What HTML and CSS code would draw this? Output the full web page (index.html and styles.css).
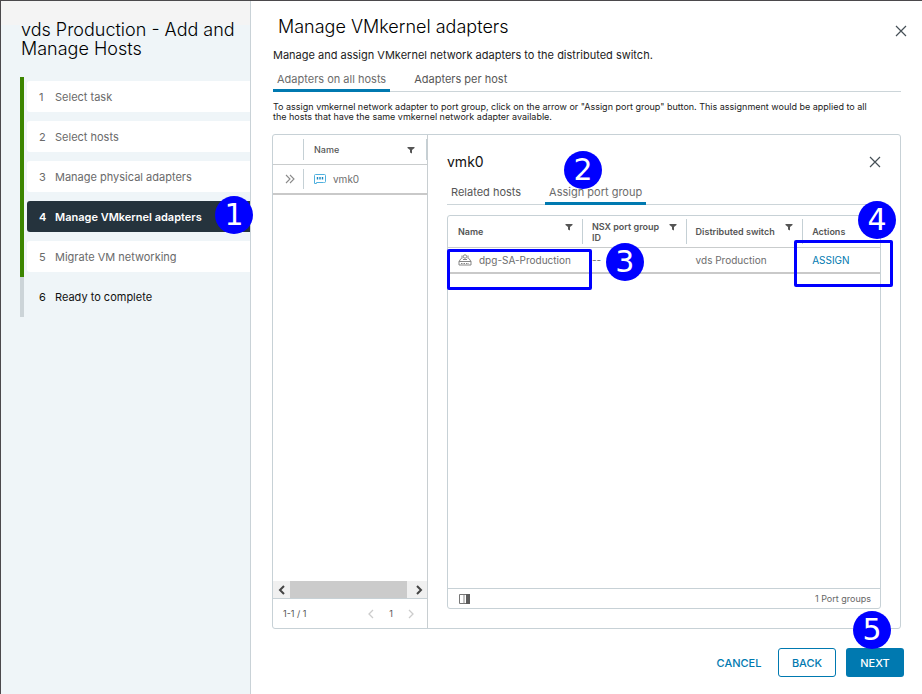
FILE: index.html
```html
<!DOCTYPE html>
<html lang="en">
<head>
<meta charset="utf-8">
<meta name="viewport" content="width=device-width, initial-scale=1">
<title>vds Production - Add and Manage Hosts</title>
<link rel="stylesheet" href="styles.css">
</head>
<body>
<svg class="sprite" aria-hidden="true">
  <symbol id="filter" viewBox="0 0 8 8"><path d="M.5 1h7v1L5 4v3.500L3 6.500V4L.5 2z" fill="#555"/></symbol>
  <symbol id="close" viewBox="0 0 12 12"><path d="M1 1l10 10M11 1L1 11" stroke="#454f56" stroke-width="1.2" fill="none"/></symbol>
</svg>
<div class="wizard">
  <aside class="sidebar">
    <h2 class="wizard-title">vds Production - Add and Manage Hosts</h2>
    <ol class="steps">
      <li class="step done"><a href="#"><span class="num">1</span>Select task</a></li>
      <li class="step done"><a href="#"><span class="num">2</span>Select hosts</a></li>
      <li class="step done"><a href="#"><span class="num">3</span>Manage physical adapters</a></li>
      <li class="step done current"><a href="#" aria-current="step"><span class="num">4</span>Manage VMkernel adapters</a><span class="badge badge-1">1</span></li>
      <li class="step done"><a href="#"><span class="num">5</span>Migrate VM networking</a></li>
      <li class="step last"><a href="#"><span class="num">6</span>Ready to complete</a></li>
    </ol>
  </aside>
  <main class="page">
    <header class="page-head">
      <h1>Manage VMkernel adapters</h1>
      <button class="icon-button" type="button" aria-label="Close wizard"><svg width="12" height="12"><use href="#close"/></svg></button>
    </header>
    <p class="description">Manage and assign VMkernel network adapters to the distributed switch.</p>
    <div class="tabs" role="tablist">
      <button class="tab active" type="button" role="tab" aria-selected="true">Adapters on all hosts</button>
      <button class="tab" type="button" role="tab" aria-selected="false">Adapters per host</button>
    </div>
    <p class="hint">To assign vmkernel network adapter to port group, click on the arrow or "Assign port group" button. This assignment would be applied to all the hosts that have the same vmkernel network adapter available.</p>
    <div class="split">
      <section class="adapters">
        <table class="grid-table adapter-table">
          <colgroup><col class="col-toggle"><col></colgroup>
          <thead>
            <tr>
              <th></th>
              <th><div class="cell ruled ruled-end"><span>Name</span><svg class="filter" width="8" height="8"><use href="#filter"/></svg></div></th>
            </tr>
          </thead>
          <tbody>
            <tr>
              <td><button class="icon-button toggle" type="button" aria-label="Hide details"><svg width="10" height="10" viewBox="0 0 10 10"><path d="M1 1l4 4-4 4M5 1l4 4-4 4" fill="none" stroke="#8a8a8a" stroke-width="1.1"/></svg></button></td>
              <td><div class="cell ruled"><svg width="12" height="10" viewBox="0 0 12 10"><path d="M1.500 .5h9a1 1 0 0 1 1 1v6a1 1 0 0 1-1 1H9.500M.5 7V1.500a1 1 0 0 1 1-1M.5 6v3.500h2v-1h7" fill="none" stroke="#4fb0de"/><path d="M3.500 3v2.500M6 3v2.500M8.500 3v2.500" stroke="#1688c4" stroke-width="1.400"/></svg><span class="after-icon">vmk0</span></div></td>
            </tr>
          </tbody>
        </table>
        <div class="hscroll">
          <button class="scroll-arrow" type="button" aria-label="Scroll left"><svg width="8" height="10" viewBox="0 0 8 10"><path d="M6 1L2 5l4 4" fill="none" stroke="#444" stroke-width="2"/></svg></button>
          <span class="thumb"></span>
          <button class="scroll-arrow" type="button" aria-label="Scroll right"><svg width="8" height="10" viewBox="0 0 8 10"><path d="M2 1l4 4-4 4" fill="none" stroke="#444" stroke-width="2"/></svg></button>
        </div>
        <footer class="adapter-footer">
          <span class="range">1-1 / 1</span>
          <button class="icon-button" type="button" aria-label="Previous page" disabled><svg width="6" height="10" viewBox="0 0 6 10"><path d="M5 1L1 5l4 4" fill="none" stroke="#ccc" stroke-width="1.300"/></svg></button>
          <span>1</span>
          <button class="icon-button" type="button" aria-label="Next page" disabled><svg width="6" height="10" viewBox="0 0 6 10"><path d="M1 1l4 4-4 4" fill="none" stroke="#ccc" stroke-width="1.300"/></svg></button>
        </footer>
      </section>
      <section class="detail">
        <header class="detail-head">
          <h3>vmk0</h3>
          <button class="icon-button" type="button" aria-label="Close details"><svg width="12" height="12"><use href="#close"/></svg></button>
        </header>
        <div class="tabs" role="tablist">
          <button class="tab" type="button" role="tab" aria-selected="false">Related hosts</button>
          <button class="tab active" type="button" role="tab" aria-selected="true">Assign port group<span class="badge badge-2">2</span></button>
        </div>
        <div class="groups">
          <table class="grid-table group-table">
            <colgroup><col class="col-name"><col class="col-nsx"><col class="col-switch"><col></colgroup>
            <thead>
              <tr>
                <th><div class="cell"><span>Name</span><svg class="filter raised" width="8" height="8"><use href="#filter"/></svg></div></th>
                <th><div class="cell ruled"><span>NSX port group ID</span><svg class="filter raised" width="8" height="8"><use href="#filter"/></svg></div></th>
                <th><div class="cell ruled"><span>Distributed switch</span><svg class="filter raised" width="8" height="8"><use href="#filter"/></svg></div></th>
                <th><div class="cell ruled"><span>Actions</span></div><span class="badge badge-4">4</span></th>
              </tr>
            </thead>
            <tbody>
              <tr>
                <td><div class="cell"><svg width="14" height="12" viewBox="0 0 14 12" fill="none" stroke="#858585"><path d="M3.500 4.500H3L1 7.500v3.500h12V7.500L11 4.500h-.5M1 7.500h12"/><path d="M4 1.500v3M10 1.500v3M5 5.500h4"/><circle cx="7" cy="2.500" r="1.700"/><path d="M3 9.500h8" stroke-dasharray="1.500 1"/></svg><span class="after-icon">dpg-SA-Production</span></div><span class="callout callout-name"></span></td>
                <td><div class="cell"><span>--</span></div><span class="badge badge-3">3</span></td>
                <td><div class="cell"><span>vds Production</span></div></td>
                <td><div class="cell"><button class="assign" type="button">ASSIGN</button></div><span class="callout callout-assign"></span></td>
              </tr>
            </tbody>
          </table>
          <footer class="group-footer">
            <button class="icon-button" type="button" aria-label="Show columns"><svg width="11" height="10" viewBox="0 0 11 10"><path d="M.5.5h10v9H.5z" fill="#fff" stroke="#777"/><path d="M4 1h2v8H4z" fill="#c4c4c4"/><path d="M7 0h4v10H7z" fill="#5c5c5c"/></svg></button>
            <span>1 Port groups</span>
          </footer>
        </div>
      </section>
    </div>
    <footer class="actions">
      <button class="btn link" type="button">CANCEL</button>
      <button class="btn outline" type="button">BACK</button>
      <button class="btn primary" type="button">NEXT<span class="badge badge-5">5</span></button>
    </footer>
  </main>
</div>
</body>
</html>
```
FILE: styles.css
```css
* { box-sizing: border-box; }
body {
  margin: 0;
  font: 11px/16px Inter, "Liberation Sans", sans-serif;
  color: #1b1b1b;
  background: #fff;
}
h1, h2, h3, p, ol { margin: 0; padding: 0; font-weight: 400; }
button { font: inherit; color: inherit; border: 0; background: none; padding: 0; cursor: pointer; }
svg { display: block; flex: none; }
.sprite { position: absolute; width: 0; height: 0; }

.wizard {
  display: grid;
  grid-template-columns: 250px minmax(0, 1fr);
  min-height: 100vh;
  border: solid #4b494c;
  border-width: 1px 0 0 1px;
}
.sidebar {
  display: flex;
  flex-direction: column;
  border-right: 1px solid #c9d2d7;
  background: linear-gradient(#f4f4f4 24px, #eff5f8 24px);
}
.wizard-title {
  padding: 19px 4px 0 20px;
  margin-bottom: 19px;
  font-size: 18px;
  line-height: 19px;
  font-weight: 300;
  color: #000;
}
.steps { list-style: none; margin-left: 19px; }
.step { position: relative; padding: 4px 0 5px 3px; border-left: 4px solid #3c8500; }
.step a {
  display: flex;
  align-items: center;
  height: 31px;
  padding-left: 12px;
  border-radius: 3px 0 0 3px;
  background: #fff;
  color: #6a6a6a;
  text-decoration: none;
}
.num { width: 16px; }
.step.current a { background: #25333d; color: #fff; font-weight: 600; }
.step.last { border-color: #ccd4d8; }
.step.last a { background: none; color: #111; }

.page { display: flex; flex-direction: column; min-width: 0; padding: 15px 18px 17px 22px; }
.page-head { display: flex; justify-content: space-between; align-items: center; padding-left: 5px; }
h1 { font-size: 18px; line-height: 22px; font-weight: 300; color: #000; }
.icon-button { display: flex; align-items: center; }
.page-head .icon-button { margin: 7px -3px 0 0; }
.description { margin-top: 9px; }
.tabs { display: flex; gap: 20px; margin-right: 3px; box-shadow: inset 0 -1px #ccd5d9; }
.tab { position: relative; height: 24px; padding: 0 4px; color: #565656; line-height: 22px; border-bottom: 3px solid transparent; }
.tab.active { border-color: #0079b0; color: #6c6c6c; }
.page > .tabs { margin-top: 5px; }
.hint { margin: 10px 24px 0 0; font-size: 9px; line-height: 10px; }

.split {
  flex: 1;
  display: grid;
  grid-template-columns: 155px minmax(0, 1fr);
  margin: 12px 3px 0 -1px;
  border: 1px solid #c7d1d6;
  border-radius: 3px;
}
.adapters { display: flex; flex-direction: column; border-right: 1px solid #c8ced1; }
.grid-table { width: 100%; table-layout: fixed; border-collapse: collapse; }
.grid-table th, .grid-table td { position: relative; padding: 0; text-align: left; }
.grid-table th { font-size: 9px; line-height: 11px; font-weight: 600; color: #565656; border-bottom: 1px solid #c9cccd; }
.adapter-table th { font-weight: 500; }
.grid-table td { color: #6d6d6d; border-bottom: 2px solid #c9c9c9; font-size: 10px; }
.cell { display: flex; align-items: center; padding: 0 9px 0 10px; border-left: 1px solid transparent; }
.cell.ruled { border-left-color: #c5d0d5; }
.cell.ruled-end { border-right: 1px solid #c5d0d5; padding-right: 11px; }
.filter { margin-left: auto; }
.after-icon { margin-left: 7px; }
.col-toggle { width: 30px; }
.adapter-table .cell { height: 21px; margin: 4px 0; }
.adapter-table td .cell { height: 20px; }
.toggle { justify-content: center; width: 100%; padding-left: 4px; }
.hscroll { display: flex; height: 17px; margin-top: auto; background: #f0f0f0; }
.scroll-arrow { display: flex; align-items: center; justify-content: center; width: 17px; }
.thumb { flex: 1; background: #cbcbcb; margin-right: 3px; }
.adapter-footer {
  display: flex;
  align-items: center;
  gap: 15px;
  height: 30px;
  padding: 0 13px 0 10px;
  border-top: 1px solid #c7d1d6;
  font-size: 9px;
  color: #555;
}
.range { margin-right: auto; }

.detail { display: flex; flex-direction: column; padding: 18px 19px 19px; min-width: 0; }
.detail-head { display: flex; justify-content: space-between; }
h3 { font-size: 14px; line-height: 18px; color: #111; }
.detail-head + .tabs { margin: 10px 0; }
.groups { flex: 1; display: flex; flex-direction: column; border: 1px solid #c7d1d6; border-radius: 3px; }
.group-table .cell { padding-left: 9px; }
.group-table th .cell { height: 25px; margin: 3px 0; }
.group-table td .cell { height: 24px; }
.col-name { width: 31%; }
.col-nsx { width: 24%; }
.col-switch { width: 27%; }
.raised { align-self: flex-start; margin-top: 4px; }
.assign { color: #0079b0; }
.group-footer {
  display: flex;
  align-items: center;
  justify-content: space-between;
  height: 20px;
  margin-top: auto;
  padding: 0 9px 0 11px;
  border-top: 1px solid #c7d1d6;
  font-size: 9px;
  color: #666;
}

.actions { display: flex; justify-content: flex-end; gap: 10px; margin-top: 19px; }
.btn { position: relative; min-width: 58px; height: 29px; border: 1px solid transparent; border-radius: 3px; color: #0079b0; font-weight: 500; }
.outline { border-color: #0079b0; }
.primary { background: #0079b0; color: #fff; }

.badge {
  position: absolute;
  z-index: 2;
  width: 38px;
  height: 38px;
  border-radius: 50%;
  background: #00f;
  color: #fff;
  font: 30px/38px "DejaVu Sans", sans-serif;
  text-align: center;
}
.badge-1 { right: -3px; top: -1px; }
.badge-2 { left: 19px; top: -30px; }
.badge-3 { left: 24px; top: -5px; }
.badge-4 { right: -16px; top: -15px; }
.badge-5 { left: 6px; top: -38px; }
.callout { position: absolute; z-index: 1; border: 3px solid #00f; border-radius: 2px; }
.callout-name { left: -1px; top: 1px; right: -10px; height: 41px; }
.callout-assign { left: -8px; right: -13px; top: -8px; height: 47px; }
```
